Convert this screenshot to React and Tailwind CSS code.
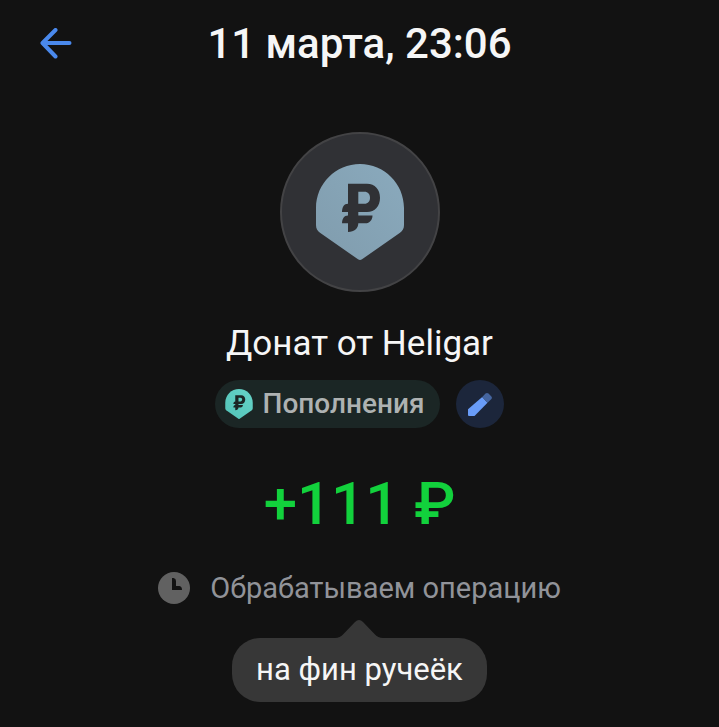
import React from "react";

const operation = {
  date: "11 марта, 23:06",
  title: "Донат от Heligar",
  category: "Пополнения",
  amount: "+111 ₽",
  status: "Обрабатываем операцию",
  message: "на фин ручеёк",
};

const BackIcon = () => (
  <svg
    className="w-8 h-8"
    viewBox="0 0 32 32"
    fill="none"
    stroke="currentColor"
    strokeWidth="4"
    strokeLinecap="round"
    strokeLinejoin="round"
    aria-hidden="true"
  >
    <path d="M29.500 15H3M15.500 2L2.500 15L15.500 28.500" />
  </svg>
);

// shield with the ruble sign on it, used big and small
const RubleShield = ({ className, from, to, sign }) => (
  <svg className={className} viewBox="0 0 88 96" aria-hidden="true">
    <defs>
      <linearGradient id={"shield" + from.slice(1)} x1="0" y1="1" x2="1" y2="0">
        <stop offset="0" stopColor={from} />
        <stop offset="1" stopColor={to} />
      </linearGradient>
    </defs>
    <path
      fill={"url(#shield" + from.slice(1) + ")"}
      d="M44 0C68.300 0 88 19.700 88 44V61C88 64.500 86.600 66.800 84 68.700L46 95.300Q44 96.700 42 95.300L4 68.700C1.400 66.800 0 64.500 0 61V44C0 19.700 19.700 0 44 0Z"
    />
    <path
      fill={sign}
      fillRule="evenodd"
      d="M32 19.700H51C59 19.700 64 25.500 64 33.700C64 42 59 48 51 48H42.300V51.500H56.500C56.500 56 53.500 59.300 49.500 59.300H42.300C42.300 64.500 38.500 68 32 68V59.300H26C26 55 28 51.500 32 51.500V48H26C26 43 28 39.700 32 39.700ZM42.300 27.700V39.700H48.500C52 39.700 54 37.200 54 33.700C54 30.200 52 27.700 48.500 27.700Z"
    />
  </svg>
);

const PencilIcon = () => (
  <svg className="w-6 h-6" viewBox="0 0 24 24" aria-hidden="true">
    <path fill="#699cf8" d="M0 17.200L14.200 5L19.500 10.800L6.500 24H1Q0 24 0 23Z" />
    <path
      fill="#45659f"
      d="M14.200 5L17.500 1.600Q19 .2 20.500 1.600L23.400 4.500Q24.600 5.900 23.200 7.200L19.500 10.800Z"
    />
  </svg>
);

const ClockIcon = () => (
  <svg className="w-8 h-8" viewBox="0 0 32 32" aria-hidden="true">
    <circle cx="16" cy="16" r="16" fill="#616161" />
    <path d="M14 6H15.500Q18 6.500 18 9V14H21.500Q24 14.500 24 18H14Z" fill="#121212" />
  </svg>
);

const App = () => {
  return (
    <div className="min-h-screen bg-[#121212] text-[#f6f6f6] font-['Roboto','Noto_Sans',sans-serif]">
      <header className="grid grid-cols-[48px_1fr_48px] items-center px-8 pt-5">
        <button
          type="button"
          aria-label="Назад"
          className="flex h-12 w-12 items-center justify-center text-[#4a89ec]"
        >
          <BackIcon />
        </button>
        <h1 className="text-center text-[42px] leading-12 font-medium">{operation.date}</h1>
      </header>

      <main className="flex flex-col items-center pt-16 pb-6">
        <div className="flex h-40 w-40 items-center justify-center rounded-full border-2 border-[#434345] bg-[#303135]">
          <RubleShield className="h-24 w-22" from="#809cad" to="#8aaabd" sign="#303135" />
        </div>

        <h2 className="mt-8 text-[35px] leading-10">{operation.title}</h2>

        <div className="mt-4 flex items-center gap-4">
          <button
            type="button"
            className="flex h-12 items-center gap-2.5 rounded-full bg-[#1b2625] pl-2.5 pr-4 text-[28px] font-medium text-[#aeb2b2]"
          >
            <RubleShield className="h-[30px] w-7" from="#52c4b8" to="#66d3c8" sign="#1b2625" />
            {operation.category}
          </button>
          <button
            type="button"
            aria-label="Изменить категорию"
            className="flex h-12 w-12 items-center justify-center rounded-full bg-[#1c263b]"
          >
            <PencilIcon />
          </button>
        </div>

        <p className="mt-10 text-[60px] leading-18 font-medium text-[#12d13c]">
          {operation.amount}
        </p>

        <div className="mt-7 flex items-center gap-5 text-[29px] leading-10 text-[#919399]">
          <ClockIcon />
          <p>{operation.status}</p>
        </div>

        <div className="mt-3 flex flex-col items-center">
          <svg className="h-[18px] w-12" viewBox="0 0 48 18" fill="#373737" aria-hidden="true">
            <path d="M0 18Q5 18 8.500 14L20 2Q24-2 28 2L39.500 14Q43 18 48 18Z" />
          </svg>
          <p className="rounded-[28px] bg-[#373737] px-6 py-3 text-[31px] leading-10">
            {operation.message}
          </p>
        </div>
      </main>
    </div>
  );
};

export default App;
